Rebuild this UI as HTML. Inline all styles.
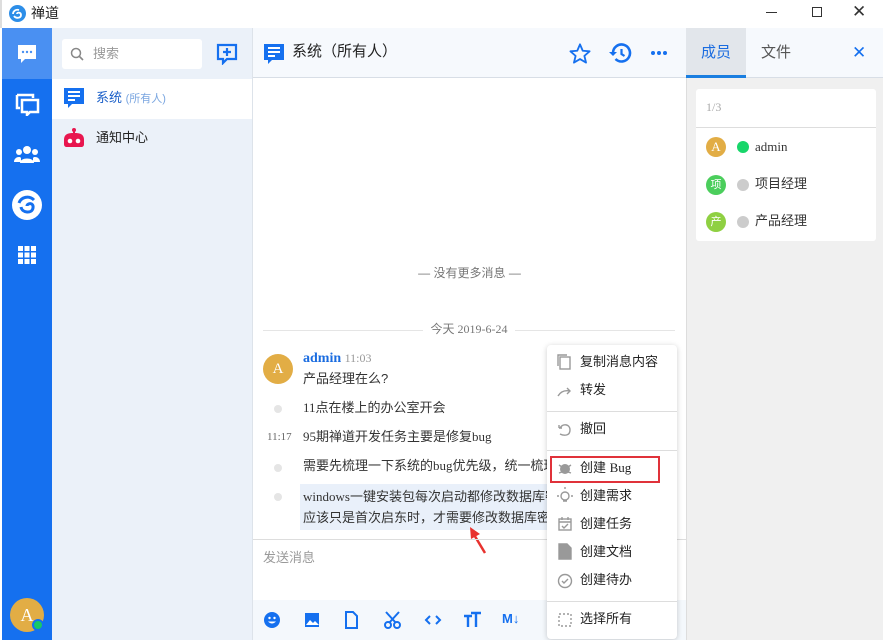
<!DOCTYPE html>
<html><head><meta charset="utf-8"><style>
*{margin:0;padding:0;box-sizing:border-box}
body{width:883px;height:640px;overflow:hidden;background:#fff;font-family:"Liberation Sans","Noto Sans CJK SC",sans-serif;font-size:13px;color:#333;position:relative;line-height:1.2}
.abs{position:absolute}
.serif{font-family:"Liberation Serif","Noto Sans CJK SC",serif}
.mi{position:absolute;left:580px;font-size:13px;line-height:18px;color:#222}
</style></head><body>
<!-- title bar -->
<div class="abs" style="left:0;top:0;width:883px;height:28px;background:#fff;border-left:2px solid #ddd"></div>
<svg class="abs" style="left:9px;top:5px" width="17" height="17" viewBox="0 0 17 17"><circle cx="8.5" cy="8.5" r="8.5" fill="#2d8ee8"/><path d="M4 9c0-3 3-5 6-4M5 11c2 3 7 2 7-1s-4-3-4-1" stroke="#fff" stroke-width="1.8" fill="none"/></svg>
<div class="abs" style="left:31px;top:5px;font-size:14px;color:#222">禅道</div>
<div class="abs" style="left:766px;top:12px;width:11px;height:1px;background:#333"></div>
<div class="abs" style="left:812px;top:7px;width:10px;height:10px;border:1px solid #333"></div>
<div class="abs" style="left:852px;top:2px;font-size:17px;color:#333">✕</div>
<!-- left nav -->
<div class="abs" style="left:2px;top:28px;width:50px;height:612px;background:#1570ef"></div>
<div class="abs" style="left:2px;top:28px;width:50px;height:51px;background:#4a90f2"></div>
<svg class="abs" style="left:16px;top:43px" width="22" height="22" viewBox="0 0 22 22"><path d="M2 2h18v14H9l-4 4v-4H2z" fill="#fff"/><circle cx="7" cy="9" r="1.2" fill="#4a90f2"/><circle cx="11" cy="9" r="1.2" fill="#4a90f2"/><circle cx="15" cy="9" r="1.2" fill="#4a90f2"/></svg>
<svg class="abs" style="left:15px;top:92px" width="25" height="24" viewBox="0 0 25 24"><path d="M2 3h16v3" stroke="#fff" stroke-width="2.5" fill="none"/><path d="M2 3v13h3" stroke="#fff" stroke-width="2.5" fill="none"/><path d="M7 8h16v12h-8l-3 3v-3H7z" stroke="#fff" stroke-width="2.5" fill="none"/></svg>
<svg class="abs" style="left:14px;top:144px" width="26" height="20" viewBox="0 0 26 20"><circle cx="13" cy="6" r="4" fill="#fff"/><circle cx="5" cy="8" r="3" fill="#fff"/><circle cx="21" cy="8" r="3" fill="#fff"/><path d="M6 19c0-6 14-6 14 0z" fill="#fff"/><path d="M0 18c0-5 6-6 7-4v4zM26 18c0-5-6-6-7-4v4z" fill="#fff"/></svg>
<svg class="abs" style="left:12px;top:190px" width="30" height="30" viewBox="0 0 30 30"><circle cx="15" cy="15" r="15" fill="#fff"/><path d="M7 13c2-6 10-8 15-3M9 17c1 6 11 7 12 1s-6-5-6-2" stroke="#1570ef" stroke-width="3" fill="none"/></svg>
<svg class="abs" style="left:18px;top:246px" width="18" height="18" viewBox="0 0 18 18" fill="#fff"><rect x="0" y="0" width="5" height="5"/><rect x="6.5" y="0" width="5" height="5"/><rect x="13" y="0" width="5" height="5"/><rect x="0" y="6.5" width="5" height="5"/><rect x="6.5" y="6.5" width="5" height="5"/><rect x="13" y="6.5" width="5" height="5"/><rect x="0" y="13" width="5" height="5"/><rect x="6.5" y="13" width="5" height="5"/><rect x="13" y="13" width="5" height="5"/></svg>
<div class="abs serif" style="left:10px;top:598px;width:34px;height:34px;border-radius:50%;background:#e2ad45;color:#fff;font-size:18px;text-align:center;line-height:34px">A</div>
<div class="abs" style="left:32px;top:619px;width:12px;height:12px;border-radius:50%;background:#18c964;border:2px solid #1570ef"></div>
<!-- chat list -->
<div class="abs" style="left:52px;top:28px;width:200px;height:612px;background:#ebf1f9"></div>
<div class="abs" style="left:62px;top:39px;width:140px;height:30px;background:#fff;border-radius:3px"></div>
<svg class="abs" style="left:70px;top:47px" width="14" height="14" viewBox="0 0 14 14"><circle cx="6" cy="6" r="4.5" stroke="#888" stroke-width="1.5" fill="none"/><path d="M9.5 9.5l3.5 3.5" stroke="#888" stroke-width="1.6"/></svg>
<div class="abs" style="left:93px;top:46px;color:#999;font-size:13px">搜索</div>
<svg class="abs" style="left:216px;top:43px" width="22" height="22" viewBox="0 0 22 22"><path d="M2 2h18v14H11l-4 4v-4H2z" stroke="#1570ef" stroke-width="2.2" fill="none"/><path d="M11 5v8M7 9h8" stroke="#1570ef" stroke-width="2.2"/></svg>
<div class="abs" style="left:52px;top:79px;width:200px;height:40px;background:#fff"></div>
<svg class="abs" style="left:64px;top:88px" width="20" height="21" viewBox="0 0 20 21"><path d="M0 0h20v16H8l-4 4v-4H0z" fill="#1570ef"/><path d="M4 4h12M4 8h12M4 12h7" stroke="#fff" stroke-width="2"/></svg>
<div class="abs" style="left:96px;top:90px;color:#1a5fc8;font-size:13px">系统 <span style="font-size:11px;color:#7aa6e0">(所有人)</span></div>
<svg class="abs" style="left:63px;top:128px" width="22" height="20" viewBox="0 0 22 20"><circle cx="11" cy="2" r="2" fill="#e8164f"/><rect x="10" y="2" width="2" height="4" fill="#e8164f"/><path d="M1 12c0-6 4-7 10-7s10 1 10 7v4c0 2-1 3-3 3H4c-2 0-3-1-3-3z" fill="#e8164f"/><circle cx="7" cy="13" r="2.3" fill="#fff"/><circle cx="15" cy="13" r="2.3" fill="#fff"/></svg>
<div class="abs" style="left:96px;top:130px;color:#222;font-size:13px">通知中心</div>
<div class="abs" style="left:252px;top:28px;width:1px;height:612px;background:#dde3ea"></div>
<!-- main header -->
<div class="abs" style="left:253px;top:28px;width:433px;height:50px;background:#f6f9fd;border-bottom:1px solid #d8dee6"></div>
<svg class="abs" style="left:264px;top:44px" width="20" height="21" viewBox="0 0 20 21"><path d="M0 0h20v16H8l-4 4v-4H0z" fill="#1570ef"/><path d="M4 4h12M4 8h12M4 12h7" stroke="#fff" stroke-width="2"/></svg>
<div class="abs" style="left:292px;top:43px;font-size:15px;color:#222">系统（所有人）</div>
<svg class="abs" style="left:569px;top:43px" width="22" height="21" viewBox="0 0 24 23"><path d="M12 1.5l3 7 7.5.6-5.7 5 1.8 7.4L12 17.6l-6.6 3.9 1.8-7.4-5.7-5 7.5-.6z" stroke="#1570ef" stroke-width="2" fill="none" stroke-linejoin="round"/></svg>
<svg class="abs" style="left:609px;top:43px" width="23" height="21" viewBox="0 0 23 21"><path d="M4 10a8.5 8.5 0 1 1 2.5 6" stroke="#1570ef" stroke-width="2.6" fill="none"/><path d="M0 9l4 4 4-4z" fill="#1570ef"/><path d="M12.5 6v5l3 2" stroke="#1570ef" stroke-width="2.2" fill="none"/></svg>
<div class="abs" style="left:651px;top:51px;width:4px;height:4px;border-radius:50%;background:#1570ef;box-shadow:6px 0 #1570ef,12px 0 #1570ef"></div>
<!-- messages -->
<div class="abs" style="left:253px;top:266px;width:433px;text-align:center;color:#777;font-size:12px">— 没有更多消息 —</div>
<div class="abs" style="left:263px;top:330px;width:412px;height:1px;background:#e5e5e5"></div>
<div class="abs serif" style="left:423px;top:322px;width:92px;background:#fff;text-align:center;color:#777;font-size:12px">今天 2019-6-24</div>
<div class="abs serif" style="left:263px;top:354px;width:30px;height:30px;border-radius:50%;background:#e2ad45;color:#fff;text-align:center;line-height:30px;font-size:15px">A</div>
<div class="abs serif" style="left:303px;top:351px;font-size:14px"><b style="color:#1a6ce0">admin</b> <span style="color:#999;font-size:12px">11:03</span></div>
<div class="abs" style="left:303px;top:371px;font-size:13px">产品经理在么?</div>
<div class="abs" style="left:274px;top:405px;width:8px;height:8px;border-radius:50%;background:#e5e5e5"></div>
<div class="abs serif" style="left:303px;top:400px;font-size:13px">11点在楼上的办公室开会</div>
<div class="abs serif" style="left:267px;top:431px;font-size:11px;color:#666">11:17</div>
<div class="abs serif" style="left:303px;top:429px;font-size:13px">95期禅道开发任务主要是修复bug</div>
<div class="abs" style="left:274px;top:464px;width:8px;height:8px;border-radius:50%;background:#e5e5e5"></div>
<div class="abs serif" style="left:303px;top:458px;font-size:13px;white-space:nowrap">需要先梳理一下系统的bug优先级，统一梳理</div>
<div class="abs" style="left:300px;top:484px;width:250px;height:46px;background:#e9f0fa"></div>
<div class="abs" style="left:274px;top:493px;width:8px;height:8px;border-radius:50%;background:#e5e5e5"></div>
<div class="abs serif" style="left:303px;top:486px;font-size:13px;line-height:21px;white-space:nowrap;width:245px;overflow:hidden">windows一键安装包每次启动都修改数据库密<br>应该只是首次启东时，才需要修改数据库密</div>
<svg class="abs" style="left:468px;top:527px" width="22" height="28" viewBox="0 0 22 28"><path d="M17 26L5 6" stroke="#e8322e" stroke-width="2.5"/><path d="M2 0l1 12 9-5z" fill="#e8322e"/></svg>
<!-- input -->
<div class="abs" style="left:253px;top:539px;width:433px;height:1px;background:#ddd"></div>
<div class="abs" style="left:263px;top:550px;color:#999;font-size:13px">发送消息</div>
<div class="abs" style="left:253px;top:600px;width:433px;height:40px;background:#f4f8fc"></div>
<svg class="abs" style="left:264px;top:611px" width="220" height="18" viewBox="0 0 220 18">
<circle cx="8" cy="9" r="8" fill="#1570ef"/><circle cx="5.5" cy="7" r="1.2" fill="#fff"/><circle cx="10.5" cy="7" r="1.2" fill="#fff"/><path d="M4 10.5q4 4 8 0z" fill="#fff"/>
<rect x="41" y="2" width="14" height="14" fill="#1570ef"/><path d="M42 14l4-5 3 3 2-2 4 4z" fill="#fff"/>
<path d="M82 1h7l4 4v12H82z" stroke="#1570ef" stroke-width="2" fill="none"/>
<circle cx="124" cy="14" r="3" stroke="#1570ef" stroke-width="2" fill="none"/><circle cx="133" cy="14" r="3" stroke="#1570ef" stroke-width="2" fill="none"/><path d="M122 1l10 11M135 1l-10 11" stroke="#1570ef" stroke-width="2"/>
<path d="M166 5l-4 4 4 4M172 5l4 4-4 4" stroke="#1570ef" stroke-width="2" fill="none"/>
<path d="M200 5h8M204 5v11M207 2h10M212 2v14" stroke="#1570ef" stroke-width="2.4"/>
</svg>
<div class="abs" style="left:502px;top:611px;color:#1570ef;font-weight:bold;font-size:13px">M↓</div>
<!-- right panel -->
<div class="abs" style="left:686px;top:28px;width:197px;height:612px;background:#f0f0f0;border-left:1px solid #ddd"></div>
<div class="abs" style="left:686px;top:28px;width:197px;height:50px;background:#f6f9fd;border-bottom:1px solid #d8dee6"></div>
<div class="abs" style="left:686px;top:28px;width:60px;height:50px;background:#e2e6eb;border-bottom:3px solid #1a7ee0"></div>
<div class="abs" style="left:701px;top:44px;color:#1a6ce0;font-size:15px">成员</div>
<div class="abs" style="left:761px;top:44px;color:#555;font-size:15px">文件</div>
<div class="abs" style="left:852px;top:43px;color:#1570ef;font-size:17px">✕</div>
<div class="abs" style="left:696px;top:89px;width:180px;height:152px;background:#fff;border-radius:3px"></div>
<div class="abs" style="left:696px;top:127px;width:180px;height:1px;background:#ddd"></div>
<div class="abs serif" style="left:706px;top:100px;color:#aaa;font-size:12px">1/3</div>
<div class="abs serif" style="left:706px;top:137px;width:20px;height:20px;border-radius:50%;background:#e2ad45;color:#fff;text-align:center;line-height:20px;font-size:13px">A</div>
<div class="abs" style="left:737px;top:141px;width:12px;height:12px;border-radius:50%;background:#18d66a"></div>
<div class="abs serif" style="left:755px;top:139px;font-size:13px">admin</div>
<div class="abs" style="left:706px;top:175px;width:20px;height:20px;border-radius:50%;background:#4bce5c;color:#fff;text-align:center;line-height:20px;font-size:11px">项</div>
<div class="abs" style="left:737px;top:179px;width:12px;height:12px;border-radius:50%;background:#ccc"></div>
<div class="abs" style="left:755px;top:176px;font-size:13px">项目经理</div>
<div class="abs" style="left:706px;top:212px;width:20px;height:20px;border-radius:50%;background:#8fd042;color:#fff;text-align:center;line-height:20px;font-size:11px">产</div>
<div class="abs" style="left:737px;top:216px;width:12px;height:12px;border-radius:50%;background:#ccc"></div>
<div class="abs" style="left:755px;top:213px;font-size:13px">产品经理</div>
<!-- context menu -->
<div class="abs" style="left:547px;top:345px;width:130px;height:294px;background:#fff;border-radius:4px;box-shadow:0 1px 6px rgba(0,0,0,.2)"></div>
<div class="abs" style="left:547px;top:411px;width:130px;height:1px;background:#ddd"></div>
<div class="abs" style="left:547px;top:450px;width:130px;height:1px;background:#ddd"></div>
<div class="abs" style="left:547px;top:601px;width:130px;height:1px;background:#ddd"></div>
<div class="abs" style="left:550px;top:456px;width:110px;height:27px;border:2px solid #e0323a"></div>
<svg class="abs" style="left:556px;top:353px" width="18" height="276" viewBox="0 0 18 276" fill="none" stroke="#999" stroke-width="1.4">
<rect x="4" y="4" width="10" height="12"/><path d="M2 13V2h9"/>
<path d="M2 43c3-5 7-6 12-5M11 35l3 3-3 3" />
<path d="M3 75h3M3 75v-3M4 75c3-5 10-4 10 2s-6 6-10 4"/>
<circle cx="9" cy="116" r="5" fill="#999" stroke="none"/><path d="M3 112l3 2M15 112l-3 2M3 120l3-1M15 120l-3-1"/>
<circle cx="9" cy="143" r="4"/><path d="M7 148h4M9 136v-2M3 143H1M17 143h-2"/>
<rect x="3" y="166" width="12" height="11"/><path d="M3 169h12M6 164v3M12 164v3M6 173l2 2 4-4"/>
<path d="M3 191h8l4 4v11H3z" fill="#999"/>
<circle cx="9" cy="228" r="6.5"/><path d="M6 228l2 2 4-4"/>
<rect x="3" y="261" width="12" height="12" stroke-dasharray="2 2"/>
</svg>
<div class="mi" style="top:353px">复制消息内容</div>
<div class="mi" style="top:381px">转发</div>
<div class="mi" style="top:420px">撤回</div>
<div class="mi" style="top:459px">创建 <span class="serif">Bug</span></div>
<div class="mi" style="top:487px">创建需求</div>
<div class="mi" style="top:515px">创建任务</div>
<div class="mi" style="top:543px">创建文档</div>
<div class="mi" style="top:571px">创建待办</div>
<div class="mi" style="top:610px">选择所有</div>
</body></html>
